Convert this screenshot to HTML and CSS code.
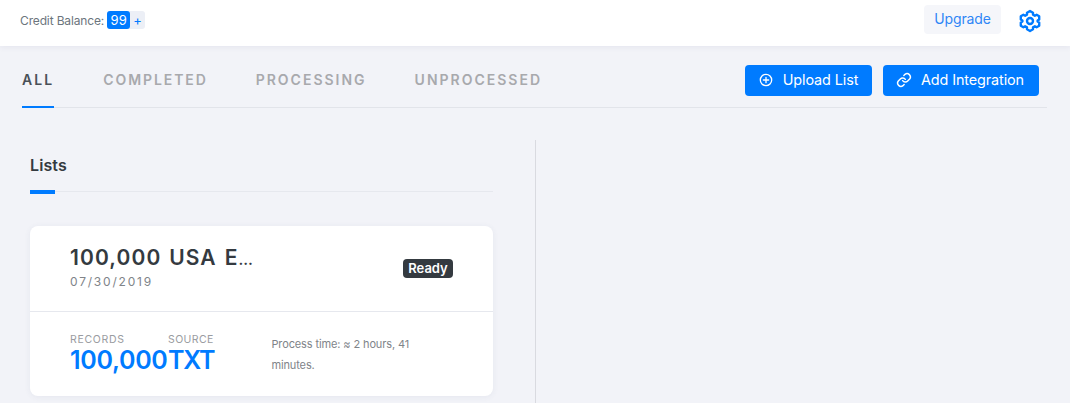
FILE: index.html
```html
<!DOCTYPE html>
<html lang="en">
<head>
<meta charset="utf-8">
<title>Lists</title>
<link rel="stylesheet" href="styles.css">
</head>
<body>
<header class="topbar">
  <div class="credit">
    <span class="credit-label">Credit Balance:</span>
    <span class="credit-pill"><span class="credit-count">99</span><span class="credit-plus">+</span></span>
  </div>
  <div class="top-actions">
    <a class="upgrade">Upgrade</a>
    <svg class="gear" viewBox="0 0 24 24" width="24" height="24" fill="none" stroke="#007bff" stroke-width="2.4" stroke-linejoin="round"><path d="M12 2 L15 3.7 L15 5.6 L16.9 6.7 L18.6 5.8 L21.2 7.3 L21.2 10.4 L19.6 11.4 L19.6 12.6 L21.2 13.6 L21.2 16.7 L18.6 18.2 L16.9 17.3 L15 18.4 L15 20.3 L12 22 L9 20.3 L9 18.4 L7.1 17.3 L5.4 18.2 L2.8 16.7 L2.8 13.6 L4.4 12.6 L4.4 11.4 L2.8 10.4 L2.8 7.3 L5.4 5.8 L7.1 6.7 L9 5.6 L9 3.7 Z"/><circle cx="12" cy="12" r="3"/></svg>
  </div>
</header>
<main class="content">
  <div class="tabbar">
    <nav class="tabs">
      <a class="tab active">ALL</a>
      <a class="tab tab-completed">COMPLETED</a>
      <a class="tab">PROCESSING</a>
      <a class="tab">UNPROCESSED</a>
    </nav>
    <div class="tab-buttons">
      <button class="btn btn-upload"><svg viewBox="0 0 16 16" width="14" height="14" fill="none" stroke="#fff" stroke-width="1.5" stroke-linecap="round"><circle cx="8" cy="8" r="6.5"/><path d="M8 5v6M5 8h6"/></svg>Upload List</button>
      <button class="btn btn-integration"><svg viewBox="0 0 24 24" width="16" height="16" fill="none" stroke="#fff" stroke-width="2.2" stroke-linecap="round" stroke-linejoin="round"><path d="M10 13a5 5 0 0 0 7.5.5l3-3a5 5 0 0 0-7-7l-1.7 1.7"/><path d="M14 11a5 5 0 0 0-7.5-.5l-3 3a5 5 0 0 0 7 7l1.7-1.7"/></svg>Add Integration</button>
    </div>
  </div>
  <div class="columns">
    <section class="lists">
      <h2 class="lists-title">Lists</h2>
      <article class="card">
        <div class="card-top">
          <div class="card-heading">
            <h3 class="card-name">100,000 USA E<span class="ellipsis">…</span></h3>
            <div class="card-date">07/30/2019</div>
          </div>
          <span class="badge">Ready</span>
        </div>
        <div class="card-bottom">
          <div class="stats">
            <div class="stat stat-records"><div class="stat-label">RECORDS</div><div class="stat-value">100,000</div></div>
            <div class="stat stat-source"><div class="stat-label">SOURCE</div><div class="stat-value">TXT</div></div>
          </div>
          <p class="process">Process time: ≈ 2 hours, 41 minutes.</p>
        </div>
      </article>
    </section>
    <div class="preview"></div>
  </div>
</main>
</body>
</html>
```
FILE: styles.css
```css
* { box-sizing: border-box; }
html, body { height: 100%; }
body {
  margin: 0;
  background: #f2f3f8;
  font-family: Inter, "Noto Sans", sans-serif;
  overflow: hidden;
}
.topbar {
  height: 46px;
  background: #fff;
  box-shadow: 0 1px 6px rgba(60, 70, 110, 0.08);
  display: flex;
  align-items: center;
  justify-content: space-between;
  padding: 0 28px 6px 20px;
}
.credit { display: flex; align-items: center; gap: 3px; font-size: 12px; color: #6c757d; letter-spacing: -0.14px; }
.credit-pill { display: flex; align-items: stretch; height: 18px; background: #eceff6; border-radius: 3px; letter-spacing: 0; }
.credit-count { background: #007bff; color: #fff; width: 23px; border-radius: 3px; text-align: center; line-height: 18px; font-size: 13px; }
.credit-plus { color: #007bff; width: 15px; text-align: center; line-height: 18px; font-size: 13px; }
.top-actions { display: flex; align-items: center; gap: 17px; }
.upgrade { display: block; width: 77px; height: 29px; margin-bottom: 1px; background: #f5f6fa; border-radius: 4px; color: #2f86f6; font-size: 14px; line-height: 28px; text-align: center; letter-spacing: -0.1px; }
.gear { display: block; margin-top: 2px; }
.content { padding: 0 23px 0 22px; }
.tabbar {
  height: 62px;
  display: flex;
  justify-content: space-between;
  border-bottom: 1px solid #e2e4ea;
}
.tabs { display: flex; gap: 48px; }
.tab {
  font-size: 14px;
  font-weight: 600;
  letter-spacing: 2px;
  color: #a8a9ad;
  padding-top: 25px;
  height: 62px;
}
.tab.active { color: #495057; letter-spacing: 2.1px; margin-right: 1px; border-bottom: 2.5px solid #007bff; }
.tab-completed { letter-spacing: 1.9px; }
.tab-buttons { display: flex; gap: 11px; padding: 19px 8px 0 0; }
.btn {
  height: 31px;
  display: flex;
  align-items: center;
  justify-content: center;
  border: 0;
  border-radius: 4px;
  background: #007bff;
  color: #fff;
  padding: 0 0 2px;
  font: 400 14.4px Inter, "Noto Sans", sans-serif;
  letter-spacing: -0.1px;
}
.btn-upload { width: 127px; gap: 10px; }
.btn-integration { width: 156px; gap: 9px; padding-right: 2px; }
.columns { display: flex; padding: 32px 0 0 8px; }
.lists { width: 506px; height: 263px; border-right: 1px solid #d9dae0; padding-right: 42px; }
.lists-title {
  margin: 0 0 34px;
  height: 52px;
  padding-top: 15px;
  font-size: 16px;
  font-weight: 600;
  letter-spacing: 0.1px;
  color: #343a40;
  border-bottom: 1px solid #e6e8ee;
  position: relative;
}
.lists-title::after {
  content: "";
  position: absolute;
  left: 0;
  bottom: -3px;
  width: 25px;
  height: 4px;
  background: #007bff;
}
.card {
  width: 463px;
  height: 170px;
  background: #fff;
  border-radius: 8px;
  box-shadow: 0 1px 6px rgba(60, 70, 110, 0.07);
}
.card-top {
  height: 86px;
  border-bottom: 1px solid #e6e8ee;
  padding: 20px 40px 0;
  display: flex;
  justify-content: space-between;
  align-items: flex-start;
}
.card-name { margin: 0; font-size: 21px; line-height: 24px; font-weight: 600; color: #343a40; letter-spacing: 1.1px; word-spacing: 1.5px; }
.ellipsis { font-size: 15px; letter-spacing: 0; }
.card-date { margin-top: 2px; font-size: 12px; line-height: 16px; letter-spacing: 1.8px; color: #808489; }
.badge { margin-top: 13px; height: 19px; width: 50px; background: #343a40; color: #fff; border-radius: 4px; font-size: 13px; font-weight: 600; line-height: 19px; text-align: center; }
.card-bottom { display: flex; padding: 21px 26px 0 40px; }
.stats { display: flex; }
.stat-label { font-size: 10.5px; line-height: 14px; letter-spacing: 0.7px; color: #9a9ca1; }
.stat-value { font-size: 25px; line-height: 26px; font-weight: 600; letter-spacing: -0.3px; color: #007bff; }
.stat-records { width: 98px; }
.stat-source .stat-label { letter-spacing: 0.4px; }
.stat-source .stat-value { letter-spacing: -1.2px; }
.process { margin: 1px 0 0 57px; width: 150px; font-size: 11px; line-height: 21px; letter-spacing: -0.12px; color: #808489; }
.preview { flex: 1; }
```
